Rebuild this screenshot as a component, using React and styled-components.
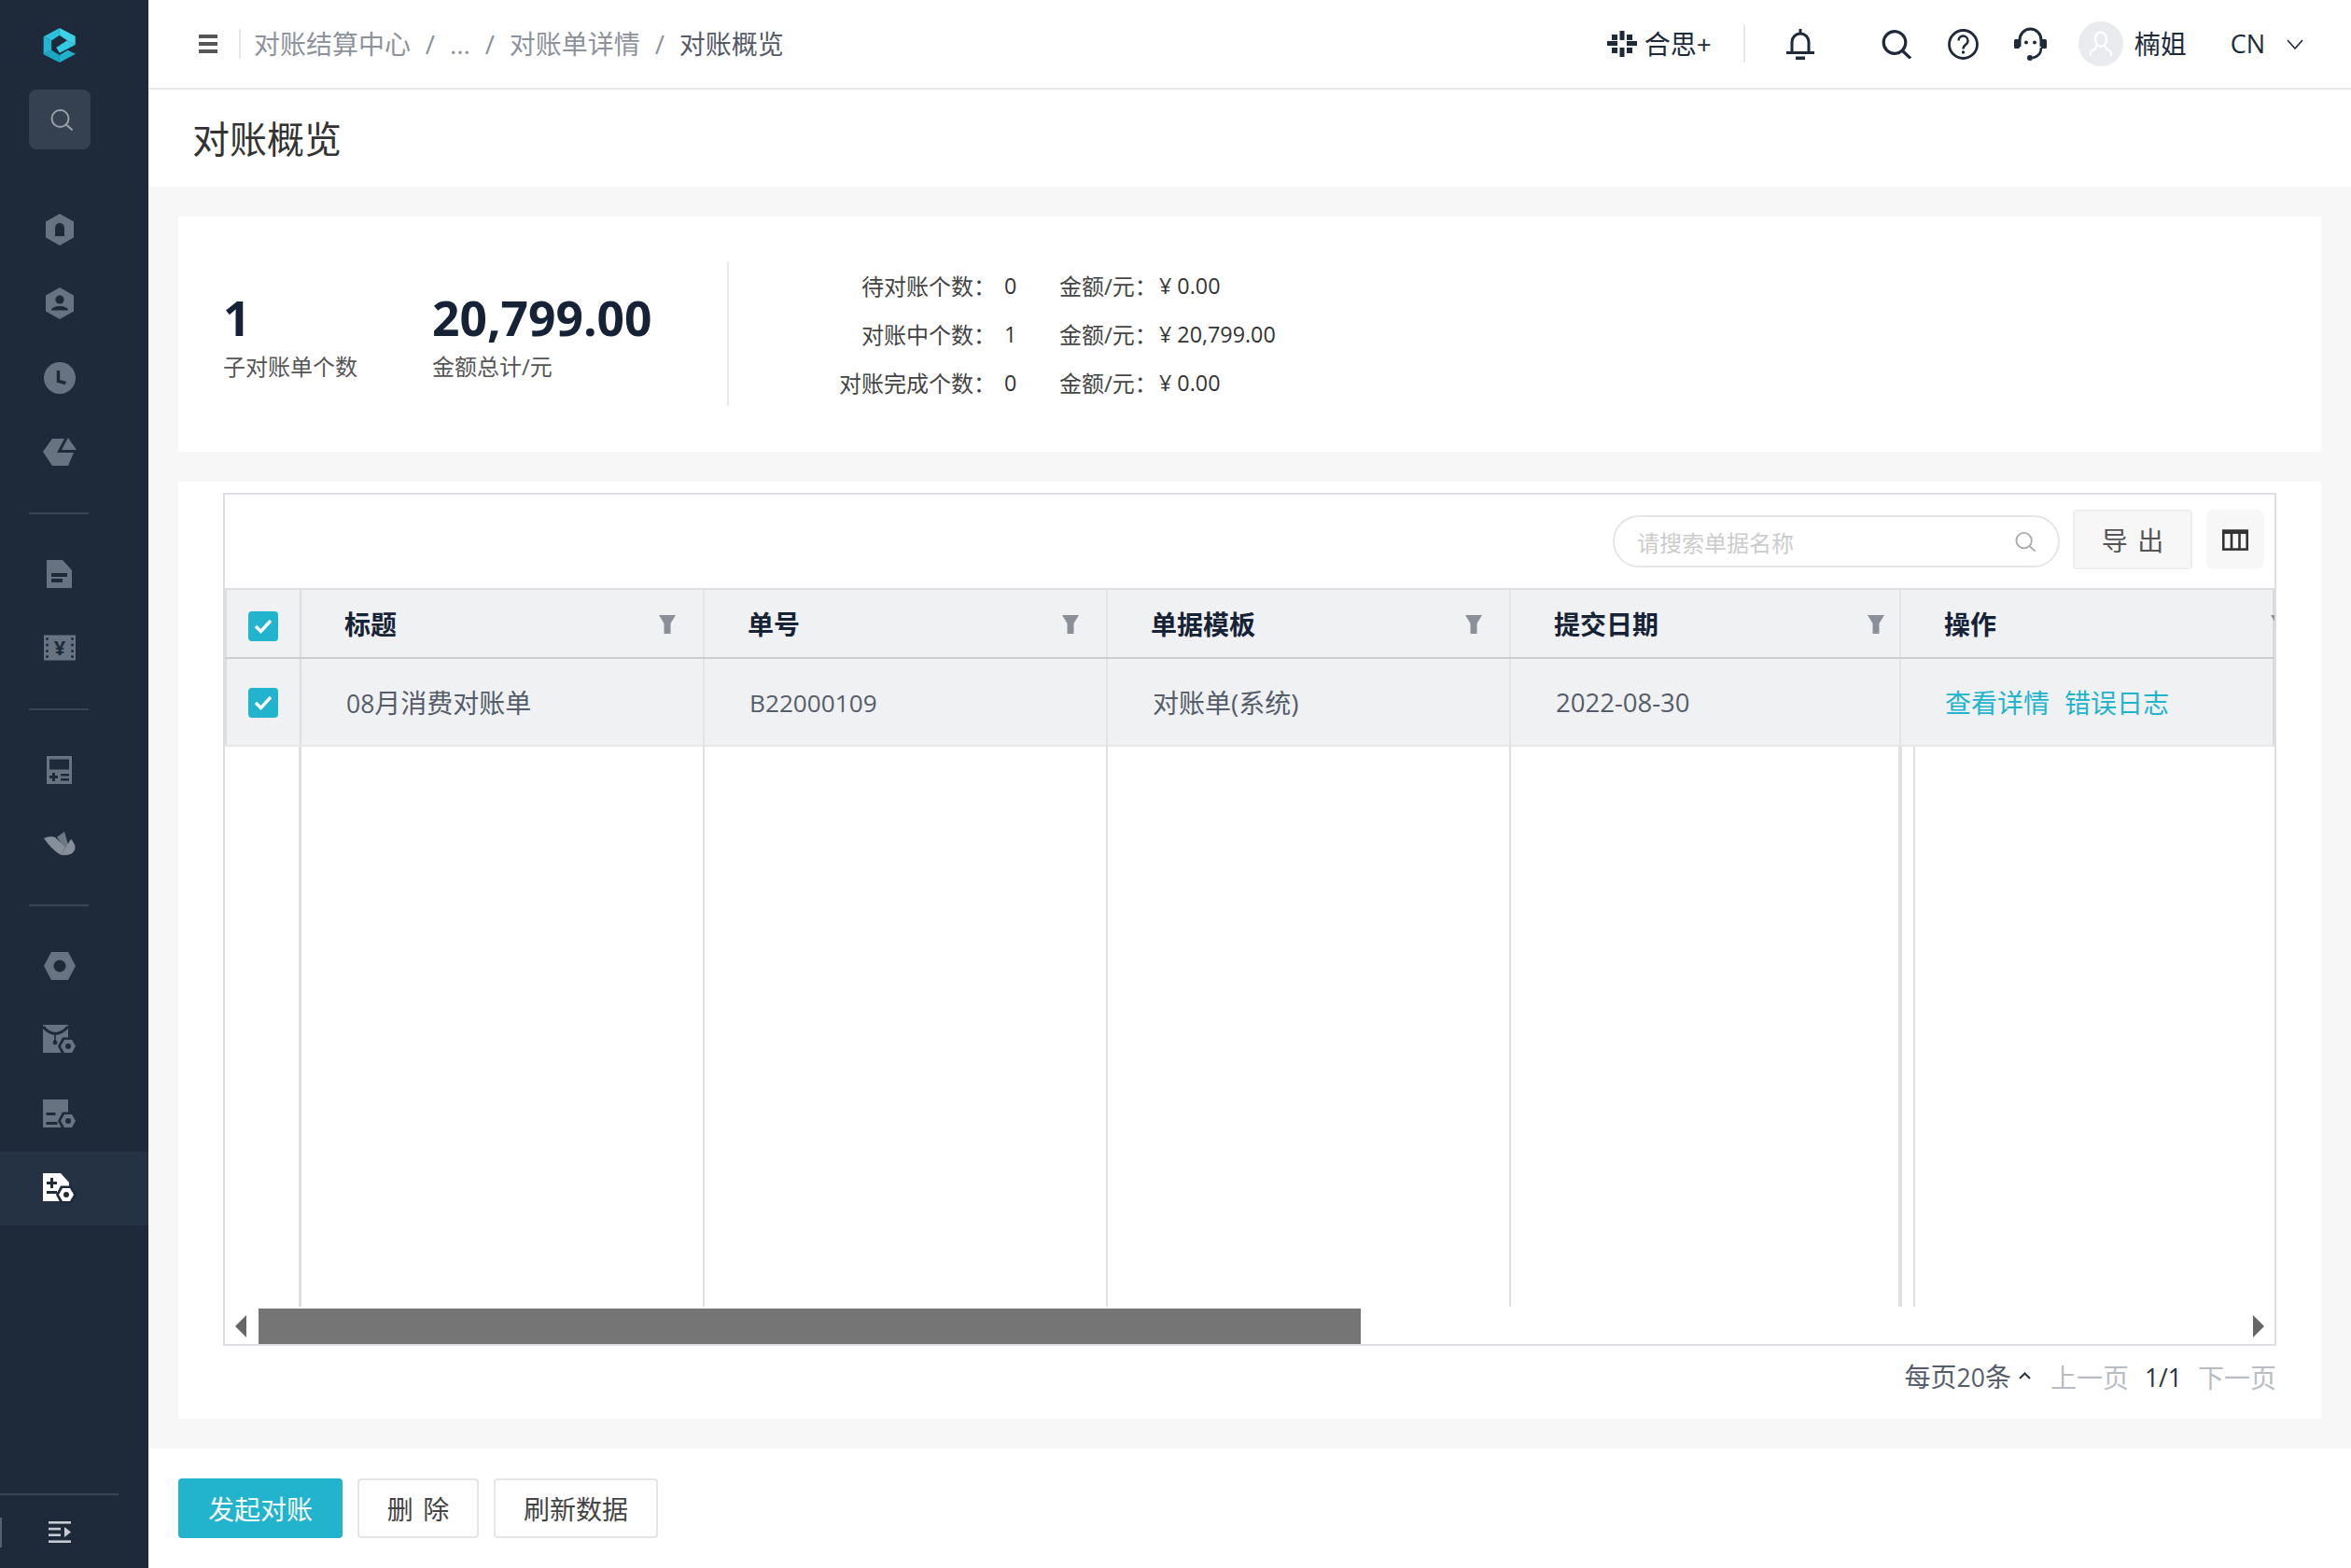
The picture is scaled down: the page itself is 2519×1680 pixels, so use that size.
import React from "react";
import styled, { createGlobalStyle } from "styled-components";

const NAVY = "#1e2a3a";
const ICON = "#687381";
const TEAL = "#22b3cd";
const FONT = `"Open Sans", "Noto Sans CJK SC", sans-serif`;

const Global = createGlobalStyle`
  html, body { margin: 0; padding: 0; background: #fff; }
  body { font-family: ${FONT}; color: #333; }
  * { box-sizing: border-box; }
`;

const Page = styled.div`
  width: 2519px;
  height: 1680px;
  display: flex;
  overflow: hidden;
`;

/* ---------- sidebar ---------- */
const Side = styled.aside`
  width: 159px;
  flex: none;
  height: 100%;
  background: ${NAVY};
  display: flex;
  flex-direction: column;
`;
const LogoCell = styled.div`
  height: 96px;
  width: 127px;
  display: flex;
  align-items: center;
  justify-content: center;
`;
const SearchTile = styled.div`
  width: 66px;
  height: 64px;
  margin: 0 0 46px 31px;
  padding-left: 3px;
  border-radius: 8px;
  background: #354151;
  display: flex;
  align-items: center;
  justify-content: center;
`;
const NavItem = styled.div`
  height: 79.5px;
  width: 159px;
  flex: none;
  padding-right: 32px;
  display: flex;
  align-items: center;
  justify-content: center;
  background: ${(p) => (p.$active ? "#253243" : "transparent")};
`;
const NavRule = styled.div`
  height: 51px;
  width: 127px;
  flex: none;
  padding-left: 31px;
  display: flex;
  align-items: center;
  &::before {
    content: "";
    display: block;
    width: 64px;
    height: 2px;
    background: #384553;
  }
`;
const Collapse = styled.div`
  position: relative;
  margin-top: auto;
  height: 80px;
  width: 127px;
  border-top: 2px solid #384553;
  display: flex;
  align-items: center;
  justify-content: center;
  &::before {
    content: "";
    position: absolute;
    left: 0;
    top: 24px;
    width: 2px;
    height: 32px;
    background: #56616e;
  }
`;

/* ---------- main ---------- */
const Main = styled.main`
  flex: 1;
  min-width: 0;
  display: flex;
  flex-direction: column;
`;
const TopBar = styled.header`
  height: 96px;
  flex: none;
  border-bottom: 2px solid #e8e8e8;
  padding: 0 51px 0 54px;
  display: flex;
  align-items: center;
  justify-content: space-between;
`;
const Left = styled.div`
  display: flex;
  align-items: center;
`;
const Burger = styled.div`
  width: 20px;
  height: 20px;
  display: flex;
  flex-direction: column;
  justify-content: space-between;
  & > i {
    display: block;
    height: 4px;
    background: #555;
  }
`;
const BarRule = styled.span`
  display: block;
  width: 2px;
  height: ${(p) => p.$h}px;
  background: #e6e6e6;
  margin-left: ${(p) => p.$ml}px;
`;
const Crumbs = styled.nav`
  margin-left: 14px;
  display: flex;
  align-items: center;
  font-size: 28px;
  line-height: 40px;
  color: #8d929b;
`;
const Slash = styled.span`
  margin: 0 15.8px;
  font-size: 28px;
`;
const CrumbNow = styled.span`
  color: #555a66;
`;
const Right = styled.div`
  display: flex;
  align-items: center;
  color: ${NAVY};
  font-size: 28px;
  line-height: 40px;
`;
const RightItem = styled.div`
  margin-left: ${(p) => p.$ml || 0}px;
  display: flex;
  align-items: center;
  flex: none;
`;
const Lang = styled.span`
  font-size: 27px;
`;
const Avatar = styled.div`
  width: 48px;
  height: 48px;
  border-radius: 50%;
  background: #eaebee;
  display: flex;
  align-items: center;
  justify-content: center;
`;
const TitleBar = styled.div`
  height: 104px;
  flex: none;
  padding: 2px 0 0 47px;
  display: flex;
  align-items: center;
`;
const Title = styled.h1`
  margin: 0;
  font-size: 40px;
  font-weight: 400;
  line-height: 56px;
  color: #333;
`;
const Content = styled.div`
  flex: 1;
  min-height: 0;
  background: #f7f7f7;
  padding: 32px;
  display: flex;
  flex-direction: column;
  gap: 32px;
`;
const SummaryCard = styled.section`
  height: 252px;
  flex: none;
  background: #fff;
  padding-left: 48px;
  display: flex;
  align-items: center;
`;
const Stat = styled.div`
  width: ${(p) => p.$w}px;
  flex: none;
  margin-top: 3px;
`;
const StatValue = styled.div`
  font-size: 51.5px;
  font-weight: 700;
  line-height: 60px;
  color: #162337;
`;
const StatLabel = styled.div`
  font-size: 24px;
  line-height: 32px;
  margin-top: 7px;
  color: #555;
`;
const SummaryRule = styled.div`
  width: 2px;
  height: 154px;
  background: #e8e8e8;
  flex: none;
`;
const Breakdown = styled.div`
  display: grid;
  grid-template-columns: 286px 68px 107px auto;
  grid-auto-rows: 52px;
  align-items: center;
  font-size: 24px;
  color: #444;
  margin-top: -2px;
`;
const BdLabel = styled.span`
  text-align: right;
`;
const BdCount = styled.span`
  font-size: 23.3px;
  padding: 2px 0 0 9px;
  color: #333;
`;
const BdMoney = styled.span`
  font-size: 23.3px;
  padding-top: 2px;
  color: #333;
`;
const TableCard = styled.section`
  flex: 1;
  min-height: 0;
  background: #fff;
  padding: 12px 48px 0;
  display: flex;
  flex-direction: column;
`;
const TableBox = styled.div`
  height: 914px;
  flex: none;
  border: 2px solid #dedee2;
  display: flex;
  flex-direction: column;
  overflow: hidden;
`;
const Toolbar = styled.div`
  height: 102px;
  flex: none;
  border-bottom: 2px solid #dedee2;
  padding: 16px 11px 0 0;
  display: flex;
  justify-content: flex-end;
  align-items: flex-start;
`;
const SearchField = styled.div`
  width: 479px;
  height: 56px;
  margin-top: 6px;
  border: 2px solid #e6e6e6;
  border-radius: 28px;
  padding: 0 24px;
  display: flex;
  align-items: center;
  justify-content: space-between;
  font-size: 24px;
  color: #ccc;
`;
const ExportBtn = styled.div`
  width: 128px;
  height: 64px;
  margin-left: 14px;
  background: #f7f7f7;
  border: 2px solid #eee;
  border-radius: 4px;
  display: flex;
  align-items: center;
  justify-content: center;
  font-size: 28px;
  color: #555;
  white-space: pre;
  word-spacing: 3px;
`;
const ColsBtn = styled.div`
  width: 62px;
  height: 64px;
  margin-left: 15px;
  background: #f7f7f7;
  border-radius: 8px;
  display: flex;
  align-items: center;
  justify-content: center;
`;
const GridRow = styled.div`
  display: grid;
  grid-template-columns: 82px 432px 432px 432px 418px 400px;
  flex: none;
  background: #f0f1f3;
  height: ${(p) => p.$h}px;
  border-bottom: 2px solid ${(p) => p.$line};
`;
const Cell = styled.div`
  position: relative;
  min-width: 0;
  overflow: hidden;
  border-right: ${(p) => (p.$last ? "none" : "2px solid #e3e4e7")};
  box-shadow: ${(p) => (p.$last ? "inset -2px 0 0 #d8d9dd" : "none")};
  display: flex;
  align-items: center;
  padding-left: ${(p) => p.$pl || 0}px;
  white-space: nowrap;
`;
const CheckCell = styled(Cell)`
  justify-content: center;
  border-right: 2px solid #dcdde0;
  padding-left: 2px;
  padding-top: ${(p) => p.$pt}px;
  box-shadow: inset 2px 0 0 #dedee2;
`;
const HeadText = styled.span`
  font-size: 28px;
  font-weight: 700;
  color: #162337;
  flex: none;
`;
const Filter = styled.svg`
  position: absolute;
  right: ${(p) => p.$right}px;
  top: 27px;
`;
const BodyText = styled.span`
  font-size: 28px;
  color: #555d6b;
`;
const Latin = styled.span`
  font-size: ${(p) => p.$s || 26.2}px;
`;
const OpLinks = styled.div`
  display: flex;
  gap: 16px;
  font-size: 28px;
  color: ${TEAL};
`;
const Check = styled.div`
  width: 32px;
  height: 32px;
  border-radius: 4px;
  background: ${TEAL};
  display: flex;
  align-items: center;
  justify-content: center;
`;
const BodyGrid = styled.div`
  flex: 1;
  min-height: 0;
  display: grid;
  grid-template-columns: 82px 432px 432px 432px 419px 1fr;
`;
const BodyCol = styled.div`
  border-right: ${(p) => p.$w || 2}px solid #e0e0e0;
`;
const BodyLast = styled.div`
  margin-left: 12px;
  border-left: 2px solid #e0e0e0;
`;
const ScrollRow = styled.div`
  height: 38px;
  margin-top: 2px;
  flex: none;
  display: flex;
  align-items: center;
  padding-right: 11px;
`;
const ScrollBtn = styled.div`
  width: 36px;
  flex: none;
  padding-left: 11px;
  display: flex;
  align-items: center;
`;
const Thumb = styled.div`
  width: 1181px;
  height: 100%;
  flex: none;
  background: #757575;
`;
const ScrollGap = styled.div`
  flex: 1;
`;
const Pager = styled.div`
  margin-top: 16px;
  display: flex;
  align-items: center;
  justify-content: flex-end;
  font-size: 28px;
  line-height: 34px;
  color: #555d6b;
`;
const PagerCaret = styled.svg`
  margin: -4px 0 0 8px;
`;
const PagerMuted = styled.span`
  color: #b9bcc2;
  margin-left: ${(p) => p.$ml}px;
`;
const PagerNow = styled.span`
  color: #2a3342;
  margin-left: 17px;
`;
const Footer = styled.footer`
  height: 128px;
  flex: none;
  padding: 32px;
  display: flex;
  gap: 16px;
  background: #fff;
`;
const Btn = styled.div`
  width: ${(p) => p.$w}px;
  height: 64px;
  border-radius: 4px;
  border: 2px solid ${(p) => (p.$primary ? TEAL : "#e6e6e6")};
  background: ${(p) => (p.$primary ? TEAL : "#fff")};
  color: ${(p) => (p.$primary ? "#fff" : "#444")};
  font-size: 28px;
  display: flex;
  align-items: center;
  justify-content: center;
  white-space: pre;
  word-spacing: 3px;
`;

/* ---------- icons ---------- */
const Logo = () => (
  <svg width="35" height="38" viewBox="28 15 108 130" preserveAspectRatio="none">
    <polygon points="30,50 56,65 56,100 30,115" fill="#22b4d2" />
    <polygon points="30,50 83,18 83,45 56,65" fill="#2cc0da" />
    <polygon points="83,18 135,48 135,80 108,64 83,45" fill="#3bd2e6" />
    <polygon points="135,80 83,110 72,90 108,64" fill="#33cbe2" />
    <polygon points="30,115 56,100 83,118 83,145" fill="#1ba6c3" />
    <polygon points="83,145 83,118 110,100 136,113" fill="#1fb2cc" />
  </svg>
);
const SmallSearch = ({ c = "#9aa0a8", w = 24, h = 23 }) => (
  <svg width={w} height={h} viewBox="0 0 24 23" fill="none" stroke={c} strokeWidth="2">
    <circle cx="10.5" cy="10" r="9" />
    <line x1="17" y1="16.5" x2="23.5" y2="22.5" />
  </svg>
);
const Hex = ({ children }) => (
  <svg width="30" height="34" viewBox="0 0 30 34">
    <polygon points="15,0 30,8.5 30,25.5 15,34 0,25.5 0,8.5" fill={ICON} />
    {children}
  </svg>
);
const Nut = ({ x, y, fill = ICON }) => (
  <g>
    <polygon
      points={`${x - 11},${y} ${x - 6},${y - 9.5} ${x + 6},${y - 9.5} ${x + 11},${y} ${x + 6},${y + 9.5} ${x - 6},${y + 9.5}`}
      fill={NAVY}
    />
    <polygon
      points={`${x - 8},${y} ${x - 4},${y - 7} ${x + 4},${y - 7} ${x + 8},${y} ${x + 4},${y + 7} ${x - 4},${y + 7}`}
      fill={fill}
    />
    <circle cx={x} cy={y} r="3" fill={NAVY} />
  </g>
);
const icons = {
  gate: (
    <Hex>
      <path d="M10 24V15a5 5 0 0 1 10 0v9z" fill={NAVY} />
    </Hex>
  ),
  person: (
    <Hex>
      <circle cx="15" cy="13" r="4.6" fill={NAVY} />
      <path d="M6 24.5c0-6 18-6 18 0z" fill={NAVY} />
    </Hex>
  ),
  clock: (
    <svg width="34" height="34" viewBox="0 0 34 34">
      <circle cx="17" cy="17" r="17" fill={ICON} />
      <path d="M15.5 9v11.5l8 2" fill="none" stroke={NAVY} strokeWidth="3.4" />
    </svg>
  ),
  shape: (
    <svg width="36" height="30" viewBox="0 0 36 30" fill={ICON}>
      <polygon points="0,15 10,1 23,1 15,16 33,16 27,30 10,30" />
      <polygon points="20,13 27,0 36,13" />
    </svg>
  ),
  doc: (
    <svg width="27" height="30" viewBox="0 0 27 30">
      <path d="M0 0h17l10 11v19H0z" fill={ICON} />
      <rect x="5" y="14" width="17" height="4" fill={NAVY} />
      <rect x="5" y="20" width="12" height="4" fill={NAVY} />
    </svg>
  ),
  film: (
    <svg width="34" height="34" viewBox="0 0 34 34">
      <rect y="3.5" width="34" height="27" fill={ICON} />
      {[7.5, 14, 20.5, 26.5].map((y) => (
        <g key={y} fill={NAVY}>
          <circle cx="3.5" cy={y} r="1.5" />
          <circle cx="30.5" cy={y} r="1.5" />
        </g>
      ))}
      <text x="17" y="25" textAnchor="middle" fontSize="22" fontWeight="700" fill={NAVY} fontFamily="Open Sans">
        ¥
      </text>
    </svg>
  ),
  calc: (
    <svg width="27" height="30" viewBox="0 0 27 30">
      <rect width="27" height="30" fill={ICON} />
      <g fill={NAVY}>
        <rect x="3" y="3.5" width="21" height="11" />
        <rect x="3" y="21" width="9" height="3" />
        <rect x="6" y="18" width="3" height="9" />
        <rect x="15" y="19" width="9" height="2.6" />
        <rect x="15" y="24" width="9" height="2.6" />
      </g>
    </svg>
  ),
  bird: (
    <svg width="34" height="26" viewBox="0 0 34 26">
      <path d="M14 6 22 0l4 14-4 4z" fill="#6d7887" />
      <path d="M0 7q7-3 12-1l11 11-5 8Q8 19 0 7z" fill="#858e9a" />
      <path d="M29 8q9 10 0 16-5 2-11 1z" fill="#858e9a" />
    </svg>
  ),
  nut: (
    <svg width="34" height="30" viewBox="0 0 34 30">
      <polygon points="0,15 8,0 26,0 34,15 26,30 8,30" fill={ICON} />
      <circle cx="17" cy="15" r="6.5" fill={NAVY} />
    </svg>
  ),
  mail: (
    <svg width="36" height="32" viewBox="0 0 36 32">
      <rect width="27" height="30" fill={ICON} />
      <path d="M0 2q13 15 27 0" fill="none" stroke={NAVY} strokeWidth="3" />
      <path d="M13 9v10" stroke={NAVY} strokeWidth="1.6" />
      <circle cx="13" cy="19" r="2.4" fill={NAVY} />
      <Nut x={27} y={23} />
    </svg>
  ),
  form: (
    <svg width="36" height="32" viewBox="0 0 36 32">
      <rect width="27" height="30" fill={ICON} />
      <rect x="3.5" y="14" width="10" height="3" fill={NAVY} />
      <rect x="3.5" y="24" width="12" height="3" fill={NAVY} />
      <Nut x={27} y={23} />
    </svg>
  ),
  add: (
    <svg width="36" height="32" viewBox="0 0 36 32">
      <path d="M0 0h19l9 10v20H0z" fill="#fff" />
      <rect x="4" y="9" width="11" height="3" fill={NAVY} />
      <rect x="8" y="5" width="3" height="11" fill={NAVY} />
      <rect x="4" y="19" width="11" height="3" fill={NAVY} />
      <Nut x={25} y={23} fill="#fff" />
    </svg>
  ),
};
const NavGlyph = ({ name, active }) => <NavItem $active={active}>{icons[name]}</NavItem>;

const CollapseIcon = () => (
  <svg width="24" height="23" viewBox="0 0 24 23" fill="#c8ccd2">
    <rect width="24" height="2.6" />
    <rect y="6.8" width="13" height="2.6" />
    <rect y="13.4" width="13" height="2.6" />
    <rect y="20.4" width="24" height="2.6" />
    <polygon points="17,6 24,11.5 17,17" />
  </svg>
);
const FunnelGlyph = ({ right = 29 }) => (
  <Filter $right={right} width="18" height="20" viewBox="0 0 18 20">
    <polygon points="0,0 18,0 12.5,9 12.5,20 5.5,20 5.5,9" fill="#8a8f99" />
  </Filter>
);
const Tick = () => (
  <svg width="20" height="16" viewBox="0 0 20 16" fill="none" stroke="#fff" strokeWidth="3.4">
    <polyline points="2,8 7.5,13.5 18,2" />
  </svg>
);
const Brand = () => (
  <svg width="32" height="28" viewBox="0 0 32 28" fill={NAVY}>
    <rect x="13.5" y="0" width="5" height="10" />
    <rect x="13.5" y="18" width="5" height="10" />
    <rect x="0" y="11" width="11" height="5" />
    <rect x="21" y="11" width="11" height="5" />
    <rect x="5" y="4" width="6" height="6" />
    <rect x="21" y="4" width="6" height="6" />
    <rect x="5" y="18" width="6" height="6" />
    <rect x="21" y="18" width="6" height="6" />
  </svg>
);
const Bell = () => (
  <svg width="30" height="33" viewBox="0 0 30 33" fill="none" stroke={NAVY} strokeWidth="3">
    <path d="M6 25V14a9 9 0 0 1 18 0v11" />
    <path d="M0 25.5h30M15 0v5" />
    <rect x="10" y="29.5" width="10" height="3.5" fill={NAVY} stroke="none" />
  </svg>
);
const BigSearch = () => (
  <svg width="32" height="31" viewBox="0 0 32 31" fill="none" stroke={NAVY} strokeWidth="3.2">
    <circle cx="14" cy="13.5" r="11.8" />
    <line x1="22" y1="22" x2="31" y2="30.5" />
  </svg>
);
const Help = () => (
  <svg width="33" height="33" viewBox="0 0 33 33" fill="none" stroke={NAVY} strokeWidth="2.8">
    <circle cx="16.5" cy="16.5" r="15" />
    <path d="M11.5 12.5a5 5 0 1 1 8 4c-2 1.4-3 2.4-3 5" strokeWidth="2.4" />
    <circle cx="16.5" cy="25" r="1.7" fill={NAVY} stroke="none" />
  </svg>
);
const Support = () => (
  <svg width="35" height="36" viewBox="0 0 35 36" fill="none" stroke={NAVY} strokeWidth="3">
    <path d="M6 21V14a11.5 12 0 0 1 23 0v7" />
    <path d="M29 22q0 9-9 11" strokeWidth="2.6" />
    <rect x="0" y="13" width="6" height="10" rx="1.5" fill={NAVY} stroke="none" />
    <rect x="29" y="13" width="6" height="10" rx="1.5" fill={NAVY} stroke="none" />
    <circle cx="13" cy="16.5" r="2" fill={NAVY} stroke="none" />
    <circle cx="22" cy="16.5" r="2" fill={NAVY} stroke="none" />
    <circle cx="17" cy="33" r="3" fill={NAVY} stroke="none" />
  </svg>
);
const UserGlyph = () => (
  <svg width="24" height="28" viewBox="0 0 24 28" fill="none" stroke="#fff" strokeWidth="2.2">
    <ellipse cx="12" cy="9" rx="6" ry="7.6" />
    <path d="M8 15q-1 4-6 7-1.5 1-1.5 5M16 15q1 4 6 7 1.5 1 1.5 5" />
  </svg>
);
const Chevron = () => (
  <svg width="18" height="11" viewBox="0 0 18 11" fill="none" stroke={NAVY} strokeWidth="1.6">
    <polyline points="1,1 9,10 17,1" />
  </svg>
);
const ColsIcon = () => (
  <svg width="28" height="23" viewBox="0 0 28 23" fill="none" stroke="#333" strokeWidth="2.6">
    <rect x="1.3" y="1.6" width="25.4" height="20" />
    <path d="M1 3h26" strokeWidth="4" />
    <path d="M10 2v20M18.5 2v20" />
  </svg>
);
const Arrow = ({ dir }) => (
  <svg width="12" height="24" viewBox="0 0 12 24">
    <polygon points={dir === "l" ? "12,0 12,24 0,12" : "0,0 0,24 12,12"} fill="#666" />
  </svg>
);

const breakdown = [
  ["待对账个数：", "0", "¥ 0.00"],
  ["对账中个数：", "1", "¥ 20,799.00"],
  ["对账完成个数：", "0", "¥ 0.00"],
];
const headers = [
  ["标题", 29],
  ["单号", 29],
  ["单据模板", 29],
  ["提交日期", 16],
];

export default function App() {
  return (
    <Page>
      <Global />
      <Side>
        <LogoCell>
          <Logo />
        </LogoCell>
        <SearchTile>
          <SmallSearch />
        </SearchTile>
        <NavGlyph name="gate" />
        <NavGlyph name="person" />
        <NavGlyph name="clock" />
        <NavGlyph name="shape" />
        <NavRule />
        <NavGlyph name="doc" />
        <NavGlyph name="film" />
        <NavRule />
        <NavGlyph name="calc" />
        <NavGlyph name="bird" />
        <NavRule />
        <NavGlyph name="nut" />
        <NavGlyph name="mail" />
        <NavGlyph name="form" />
        <NavGlyph name="add" active />
        <Collapse>
          <CollapseIcon />
        </Collapse>
      </Side>
      <Main>
        <TopBar>
          <Left>
            <Burger>
              <i />
              <i />
              <i />
            </Burger>
            <BarRule $h={32} $ml={23} />
            <Crumbs>
              <span>对账结算中心</span>
              <Slash>/</Slash>
              <span>...</span>
              <Slash>/</Slash>
              <span>对账单详情</span>
              <Slash>/</Slash>
              <CrumbNow>对账概览</CrumbNow>
            </Crumbs>
          </Left>
          <Right>
            <RightItem>
              <Brand />
            </RightItem>
            <RightItem $ml={8}>合思+</RightItem>
            <BarRule $h={40} $ml={34} />
            <RightItem $ml={44}>
              <Bell />
            </RightItem>
            <RightItem $ml={72}>
              <BigSearch />
            </RightItem>
            <RightItem $ml={39}>
              <Help />
            </RightItem>
            <RightItem $ml={38}>
              <Support />
            </RightItem>
            <RightItem $ml={34}>
              <Avatar>
                <UserGlyph />
              </Avatar>
            </RightItem>
            <RightItem $ml={12}>楠姐</RightItem>
            <RightItem $ml={47}>
              <Lang>CN</Lang>
            </RightItem>
            <RightItem $ml={23}>
              <Chevron />
            </RightItem>
          </Right>
        </TopBar>
        <TitleBar>
          <Title>对账概览</Title>
        </TitleBar>
        <Content>
          <SummaryCard>
            <Stat $w={224}>
              <StatValue>1</StatValue>
              <StatLabel>子对账单个数</StatLabel>
            </Stat>
            <Stat $w={316}>
              <StatValue>20,799.00</StatValue>
              <StatLabel>金额总计/元</StatLabel>
            </Stat>
            <SummaryRule />
            <Breakdown>
              {breakdown.map(([label, count, money]) => (
                <React.Fragment key={label}>
                  <BdLabel>{label}</BdLabel>
                  <BdCount>{count}</BdCount>
                  <span>金额/元：</span>
                  <BdMoney>{money}</BdMoney>
                </React.Fragment>
              ))}
            </Breakdown>
          </SummaryCard>
          <TableCard>
            <TableBox>
              <Toolbar>
                <SearchField>
                  <span>请搜索单据名称</span>
                  <SmallSearch c="#aaa" w={22} h={21} />
                </SearchField>
                <ExportBtn>导 出</ExportBtn>
                <ColsBtn>
                  <ColsIcon />
                </ColsBtn>
              </Toolbar>
              <GridRow $h={74} $line="#cccdd1">
                <CheckCell $pt={6}>
                  <Check>
                    <Tick />
                  </Check>
                </CheckCell>
                {headers.map(([h, right]) => (
                  <Cell key={h} $pl={46}>
                    <HeadText>{h}</HeadText>
                    <FunnelGlyph right={right} />
                  </Cell>
                ))}
                <Cell $pl={46} $last>
                  <HeadText>操作</HeadText>
                  <FunnelGlyph right={-14} />
                </Cell>
              </GridRow>
              <GridRow $h={94} $line="#e6e7ea">
                <CheckCell $pt={2}>
                  <Check>
                    <Tick />
                  </Check>
                </CheckCell>
                <Cell $pl={48}>
                  <BodyText>
                    <Latin $s={26.5}>08</Latin>月消费对账单
                  </BodyText>
                </Cell>
                <Cell $pl={48}>
                  <BodyText>
                    <Latin>B22000109</Latin>
                  </BodyText>
                </Cell>
                <Cell $pl={48}>
                  <BodyText>对账单(系统)</BodyText>
                </Cell>
                <Cell $pl={48}>
                  <BodyText>
                    <Latin $s={27.5}>2022-08-30</Latin>
                  </BodyText>
                </Cell>
                <Cell $pl={47} $last>
                  <OpLinks>
                    <span>查看详情</span>
                    <span>错误日志</span>
                  </OpLinks>
                </Cell>
              </GridRow>
              <BodyGrid>
                <BodyCol $w={3} />
                <BodyCol />
                <BodyCol />
                <BodyCol />
                <BodyCol $w={4} />
                <BodyLast />
              </BodyGrid>
              <ScrollRow>
                <ScrollBtn>
                  <Arrow dir="l" />
                </ScrollBtn>
                <Thumb />
                <ScrollGap />
                <Arrow dir="r" />
              </ScrollRow>
            </TableBox>
            <Pager>
              <span>
                每页<Latin $s={26.5}>20</Latin>条
              </span>
              <PagerCaret width="13" height="8" viewBox="0 0 13 8" fill="none" stroke="#2a3342" strokeWidth="2">
                <polyline points="1,7 6.5,1.5 12,7" />
              </PagerCaret>
              <PagerMuted $ml={21}>上一页</PagerMuted>
              <PagerNow>
                <Latin $s={26.5}>1/1</Latin>
              </PagerNow>
              <PagerMuted $ml={17}>下一页</PagerMuted>
            </Pager>
          </TableCard>
        </Content>
        <Footer>
          <Btn $w={176} $primary>
            发起对账
          </Btn>
          <Btn $w={130}>删 除</Btn>
          <Btn $w={176}>刷新数据</Btn>
        </Footer>
      </Main>
    </Page>
  );
}
